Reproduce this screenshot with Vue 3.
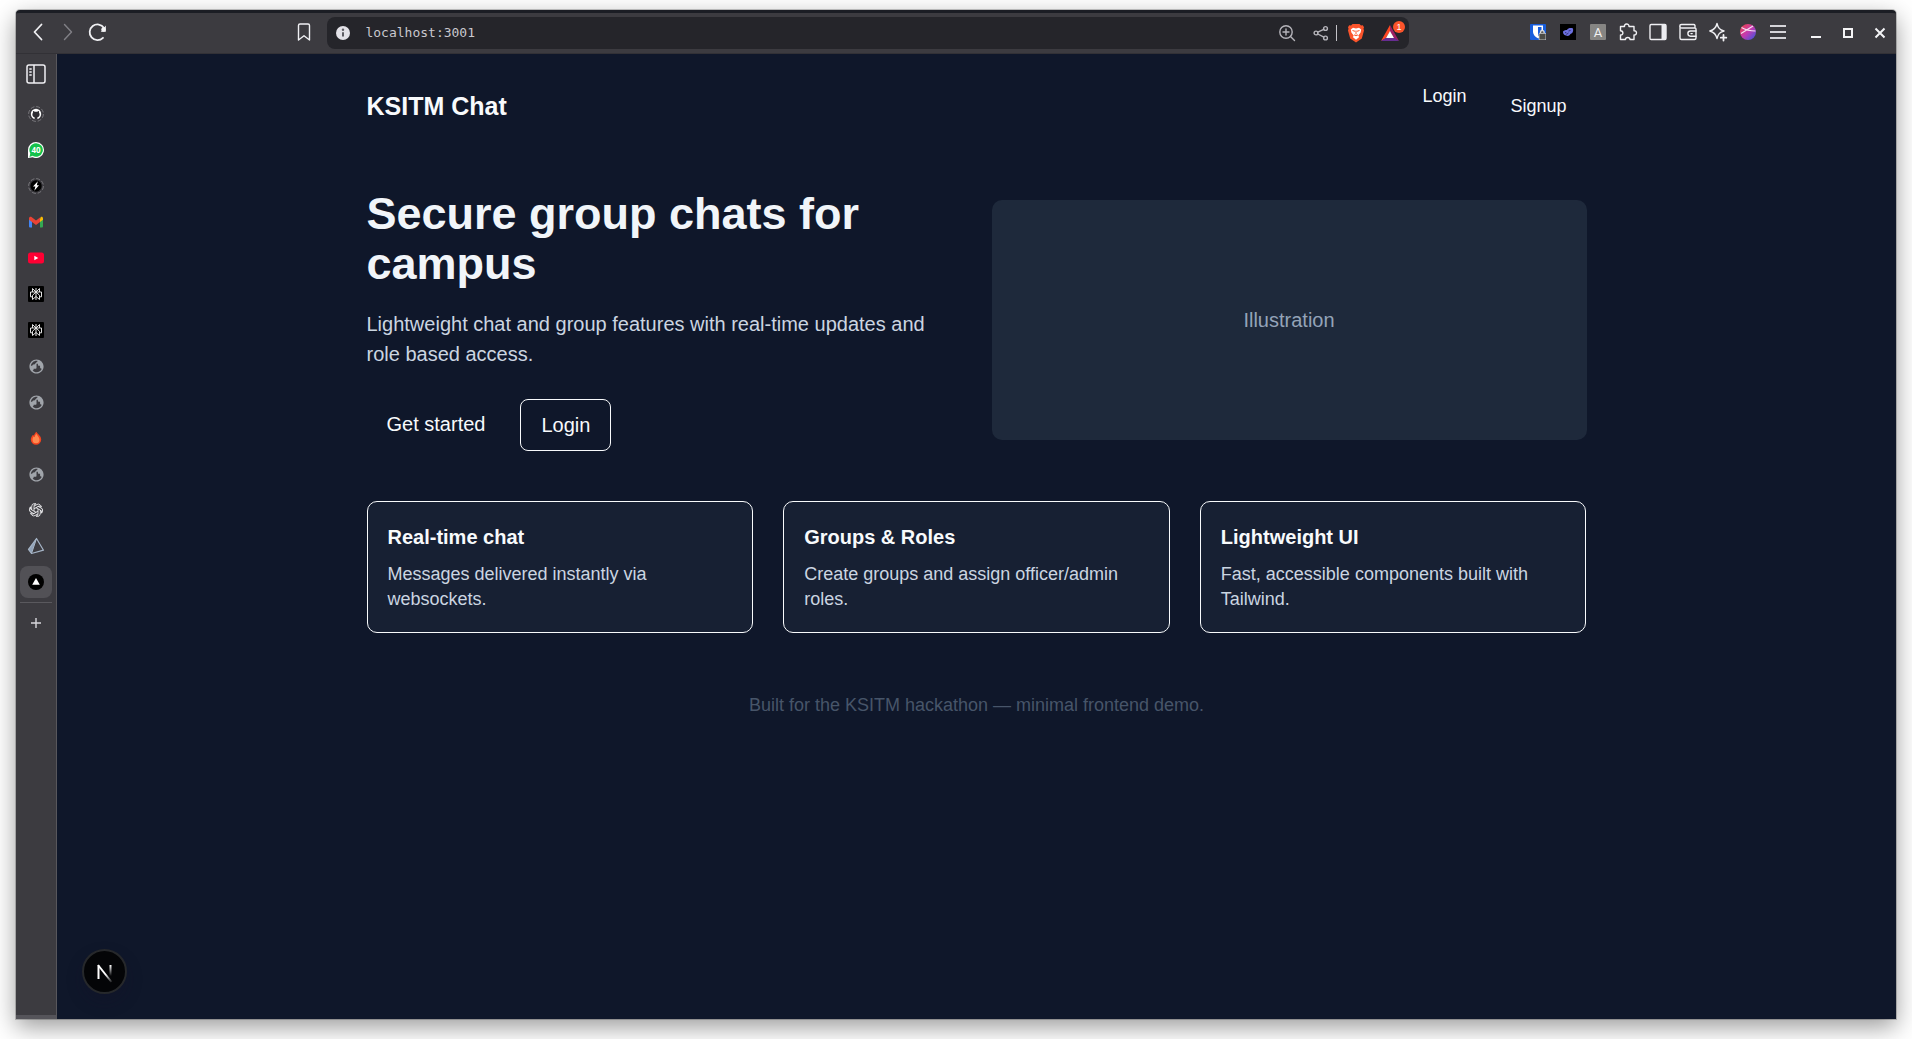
<script setup>
import { ref } from 'vue'

const address = ref('localhost:3001')

const tabs = [
  { icon: 'github', label: 'GitHub' },
  { icon: 'whatsapp', label: 'WhatsApp' },
  { icon: 'bolt', label: 'Bolt' },
  { icon: 'gmail', label: 'Gmail' },
  { icon: 'youtube', label: 'YouTube' },
  { icon: 'perplexity', label: 'Perplexity' },
  { icon: 'perplexity', label: 'Perplexity' },
  { icon: 'globe', label: 'New page' },
  { icon: 'globe', label: 'New page' },
  { icon: 'flame', label: 'Firebase' },
  { icon: 'globe', label: 'New page' },
  { icon: 'openai', label: 'ChatGPT' },
  { icon: 'prisma', label: 'Prisma' },
  { icon: 'vercel', label: 'KSITM Chat', active: true },
]

const features = [
  { title: 'Real-time chat', text: 'Messages delivered instantly via websockets.' },
  { title: 'Groups & Roles', text: 'Create groups and assign officer/admin roles.' },
  { title: 'Lightweight UI', text: 'Fast, accessible components built with Tailwind.' },
]
</script>

<template>
  <div class="desktop">
    <div class="window">
      <header class="toolbar">
        <div class="group">
          <button class="tool" aria-label="Back">
            <svg width="24" height="24" viewBox="0 0 24 24"><path d="M15.500 4.500 8.500 12l7 7.500" class="line bright thick" /></svg>
          </button>
          <button class="tool" aria-label="Forward">
            <svg width="24" height="24" viewBox="0 0 24 24"><path d="M8.500 4.500 15.500 12l-7 7.500" class="line dim" /></svg>
          </button>
          <button class="tool" aria-label="Reload">
            <svg width="24" height="24" viewBox="0 0 24 24">
              <path d="M17 17.800A7.800 7.800 0 1 1 18 8" class="line bright thick" />
              <path d="M19.800 5.500v6.200h-5z" fill="#f4f4f6" /><circle cx="17.500" cy="9.500" r="2.200" fill="#f4f4f6" />
            </svg>
          </button>
        </div>
        <div class="gap-left"></div>
        <button class="tool" aria-label="Bookmark">
          <svg width="24" height="24" viewBox="0 0 24 24"><path d="M6.500 5.500a1.500 1.500 0 0 1 1.500-1.500h8a1.500 1.500 0 0 1 1.500 1.500V20L12 15.800 6.500 20z" class="line bright" /></svg>
        </button>
        <div class="address">
          <svg width="16" height="16" viewBox="0 0 16 16"><circle cx="8" cy="8" r="7" fill="#e3e2e8" /><path d="M8 7.200v4.300" stroke="#5c5c62" stroke-width="2" /><circle cx="8" cy="4.800" r="1.200" fill="#5c5c62" /></svg>
          <input v-model="address" class="url" type="text" aria-label="Address" />
          <button class="tool" aria-label="Zoom">
            <svg width="24" height="24" viewBox="0 0 24 24"><circle cx="11" cy="11" r="6.200" class="line soft" /><path d="m15.500 15.500 4 4M8 11h6M11 8v6" class="line soft" /></svg>
          </button>
          <button class="tool share" aria-label="Share">
            <svg width="24" height="24" viewBox="0 0 24 24"><g class="line soft"><circle cx="7" cy="12" r="1.900" /><circle cx="16.500" cy="7.500" r="1.900" /><circle cx="16.500" cy="17" r="1.900" /><path d="m8.800 11.200 6-2.900M8.800 13l6 3.200" /></g></svg>
          </button>
          <span class="rule"></span>
          <button class="tool brave" aria-label="Brave Shields">
            <svg width="24" height="24" viewBox="0 0 24 24">
              <path d="M8.500 3h7l1.500 1.500 1.800-.3 1.200 2-.5 1.500.5 1.800-2.200 8L12 21.500 6.200 17.500 4 9.500l.5-1.800L4 6.200l1.200-2 1.800.3z" fill="#fb542b" />
              <path d="m6.800 8.500 2.200-1.700 3 .6 3-.6 2.200 1.700-.6 3-2.400 3.300 1 1.200-3.200 2.800-3.200-2.800 1-1.200-2.400-3.300z" fill="#fff" />
              <path d="m8.500 9.500 2.600.8M15.500 9.500l-2.600.8M12 9.500v4M10 13.800l2 1 2-1" stroke="#fb542b" stroke-width="1" fill="none" />
            </svg>
          </button>
          <button class="tool rewards" aria-label="Brave Rewards">
            <svg width="24" height="24" viewBox="0 0 24 24"><path d="M12 4v6.500L7.500 17.500 3 20z" fill="#ff4724" /><path d="M12 4v6.500l4.500 7L21 20z" fill="#9e1f63" /><path d="m3 20 4.500-3h9l4.500 3z" fill="#662d91" /><path d="m12 10 4 7H8z" fill="#fff" /></svg>
            <span class="count">1</span>
          </button>
        </div>
        <div class="gap-right"></div>
        <div class="group extensions">
          <button class="tool" aria-label="Bitwarden">
            <svg width="16" height="16" viewBox="0 0 16 16"><rect width="16" height="16" rx="1" fill="#175ddc" /><path d="M3 1.500h10v6c0 3.500-2.500 5.500-5 6.800-2.500-1.300-5-3.300-5-6.800z" fill="#fff" /><path d="M8 3h3.500v4.500c0 2-1.500 3.500-3.500 4.700z" fill="#175ddc" /><path d="M10.500 9.500V8.300a1.800 1.800 0 0 1 3.600 0v1.200" stroke="#ddd" fill="#444" stroke-width="1.300" /><rect x="9" y="9.300" width="7" height="6.700" rx="1" fill="#4b4b46" stroke="#ddd" stroke-width=".8" /></svg>
          </button>
          <button class="tool" aria-label="Masks">
            <svg width="16" height="16" viewBox="0 0 16 16"><rect width="16" height="16" fill="#000" /><path d="M3 7.500c1-1.500 3-1.500 4-1.500 1-2 4-2.500 6-1.500.6 3-.5 5-2.500 5.500-1 2-3 2.500-4.500 1.500C3.500 11 3 9.500 3 7.500z" fill="#6c6fe0" /><path d="m5 8.500 1.500.5M8.500 7l2-.5M6.500 10.500l2-1.500" stroke="#30306f" stroke-width="1" /></svg>
          </button>
          <button class="tool" aria-label="Text extension"><span class="letter">A</span></button>
          <button class="tool" aria-label="Extensions">
            <svg width="24" height="24" viewBox="0 0 24 24"><path d="M4.500 6.500h4c-.6-3 4.500-3.600 4.500 0h5v4.200c3.300-.3 3.300 4.600 0 4.300v4.500h-4c0-2.600-4.500-2.600-4.500 0h-5V15c3.200.2 3.200-4.300 0-4.300z" class="line bright" /></svg>
          </button>
          <button class="tool" aria-label="Sidebar">
            <svg width="24" height="24" viewBox="0 0 24 24"><rect x="4" y="4.500" width="16" height="15" rx="1.200" class="line bright" /><path d="M15.500 4h4.500v16h-4.500z" fill="#ececf0" /></svg>
          </button>
          <button class="tool" aria-label="Wallet">
            <svg width="24" height="24" viewBox="0 0 24 24"><g class="line bright"><path d="M19 8V5.500A1.500 1.500 0 0 0 17.500 4.500H5.500a1.700 1.700 0 0 0 0 3.500H19a1 1 0 0 1 1 1v9a1.500 1.500 0 0 1-1.500 1.500h-13A1.500 1.500 0 0 1 4 18V6" /><path d="M20 11h-5.500a2.600 2.600 0 0 0 0 5.200H20M15 13.600h1.200" /></g></svg>
          </button>
          <button class="tool" aria-label="Leo AI">
            <svg width="24" height="24" viewBox="0 0 24 24"><path d="M11 3.500c1 4.500 2.500 6.300 7 7.500-4.500 1.200-6 3-7 7.500-1-4.500-2.700-6.300-7.200-7.500C8.300 9.800 10 8 11 3.500z" class="line bright" /><path d="M17.500 15v5.500M14.800 17.700h5.500" class="line bright thick" /></svg>
          </button>
          <button class="tool" aria-label="Profile">
            <svg width="24" height="24" viewBox="0 0 24 24"><defs><linearGradient id="avatar" x1="0" y1="0" x2="1" y2="1"><stop offset="0" stop-color="#f0453f" /><stop offset=".5" stop-color="#c43bb0" /><stop offset="1" stop-color="#3157e5" /></linearGradient></defs><circle cx="12" cy="12" r="8" fill="url(#avatar)" /><path d="M5.500 7.500c4 2.500 8 3.500 14 3.500M5 13.500 17 6" stroke="#f6dff3" stroke-width="1.200" fill="none" /></svg>
          </button>
          <button class="tool" aria-label="Menu">
            <svg width="24" height="24" viewBox="0 0 24 24"><path d="M4 6h16M4 12h16M4 18h16" stroke="#d5d4d9" stroke-width="2" /></svg>
          </button>
        </div>
        <div class="group controls">
          <button class="tool" aria-label="Minimize"><svg width="24" height="24" viewBox="0 0 24 24"><path d="M7 17h10" stroke="#f4f4f6" stroke-width="2" /></svg></button>
          <button class="tool" aria-label="Maximize"><svg width="24" height="24" viewBox="0 0 24 24"><path d="M8 9h8v8H8z" stroke="#f4f4f6" stroke-width="2" fill="none" /></svg></button>
          <button class="tool" aria-label="Close"><svg width="24" height="24" viewBox="0 0 24 24"><path d="m7.500 8.500 9 9M16.500 8.500l-9 9" stroke="#f4f4f6" stroke-width="2" /></svg></button>
        </div>
      </header>

      <div class="body">
        <nav class="sidebar" aria-label="Tabs">
          <button class="tab panel" aria-label="Collapse tabs">
            <svg width="20" height="20" viewBox="0 0 20 20"><rect x="1" y="1" width="18" height="18" rx="2" fill="none" stroke="#f0f0f3" stroke-width="1.500" /><path d="M8 1v18" stroke="#f0f0f3" stroke-width="1.500" /><path d="M3.300 5h2.400M3.300 8h2.400M3.300 11h2.400" stroke="#f0f0f3" stroke-width="1.500" /></svg>
          </button>
          <button v-for="(tab, i) in tabs" :key="i" class="tab" :class="{ active: tab.active }" :aria-label="tab.label">
            <svg v-if="tab.icon === 'github'" width="16" height="16" viewBox="0 0 16 16">
              <circle cx="8" cy="8" r="7.400" fill="none" stroke="#77767b" stroke-width="1" stroke-dasharray="4 1.800" />
              <circle cx="8" cy="8" r="5.200" fill="#fff" />
              <path d="M6.600 13.400v-2.100c-1.500-.5-2.200-1.400-2.200-2.900 0-.7.200-1.200.6-1.700-.2-.6-.1-1.100.1-1.600.6 0 1.200.3 1.700.7h2.400c.5-.4 1.100-.7 1.700-.7.200.5.300 1 .1 1.600.4.500.6 1 .6 1.700 0 1.500-.7 2.400-2.200 2.900v2.100z" fill="#2d2c31" />
            </svg>
            <span v-else-if="tab.icon === 'whatsapp'" class="whatsapp">
              <svg width="16" height="16" viewBox="0 0 16 16"><path d="M8 0a8 8 0 1 1-3.300 15.300L0 16V8a8 8 0 0 1 8-8z" fill="#fff" /><path d="M8 1.200a6.800 6.800 0 1 1-3.500 12.600L1.500 15l.8-3.500A6.800 6.800 0 0 1 8 1.200z" fill="#15c24b" /></svg>
              <span class="unread">40</span>
            </span>
            <svg v-else-if="tab.icon === 'bolt'" width="16" height="16" viewBox="0 0 16 16">
              <circle cx="8" cy="8" r="7.400" fill="none" stroke="#77767b" stroke-width="1" stroke-dasharray="4 1.800" />
              <circle cx="8" cy="8" r="5.700" fill="#000" />
              <path d="M9.800 3.300 5 8.500h2.400L6.300 12.700 11 7.200H8.800z" fill="#fff" />
            </svg>
            <svg v-else-if="tab.icon === 'gmail'" width="16" height="16" viewBox="0 0 16 16">
              <path d="M1 4.500v8a1 1 0 0 0 1 1h2V7z" fill="#4285f4" /><path d="M15 4.500v8a1 1 0 0 1-1 1h-2V7z" fill="#34a853" /><path d="M12 5.200V8l3-2.300V4.300c0-1.500-1.300-2-2.300-1.300z" fill="#fbbc04" /><path d="M1 5.700V4.300C1 2.800 2.500 2.300 3.500 3L8 6.400l4-3V8l-4 3-4-3z" fill="#ea4335" />
            </svg>
            <svg v-else-if="tab.icon === 'youtube'" width="16" height="16" viewBox="0 0 16 16"><rect y="2.500" width="16" height="11" rx="2.500" fill="#ff0033" /><path d="m6.300 5.800 4 2.200-4 2.200z" fill="#fff" /></svg>
            <svg v-else-if="tab.icon === 'perplexity'" width="16" height="16" viewBox="0 0 16 16"><rect width="16" height="16" rx="1" fill="#000" /><path d="M8 2v12M4.500 2.500 8 6l3.500-3.500V6h-7zM4.500 6H2.500v4.800h2M11.500 6h2v4.800h-2M8 6 4.500 9.300v4.200L8 10.500l3.500 3V9.300z" fill="none" stroke="#e2e2e2" stroke-width="1" /></svg>
            <svg v-else-if="tab.icon === 'globe'" width="17" height="17" viewBox="0 0 24 24">
              <path d="M12 2C6.480 2 2 6.480 2 12s4.480 10 10 10 10-4.480 10-10S17.520 2 12 2zm-1 17.930c-3.950-.49-7-3.850-7-7.930 0-.62.080-1.210.210-1.790L9 15v1c0 1.100.9 2 2 2v1.930zm6.900-2.540c-.26-.81-1-1.390-1.900-1.390h-1v-3c0-.55-.45-1-1-1H8v-2h2c.55 0 1-.45 1-1V7h2c1.100 0 2-.9 2-2v-.41c2.930 1.190 5 4.060 5 7.410 0 2.080-.8 3.970-2.100 5.390z" transform="rotate(90 12 12)" fill="#a0a4aa" />
            </svg>
            <svg v-else-if="tab.icon === 'flame'" width="16" height="16" viewBox="0 0 16 16"><path d="M8.500 1.800c1 2.500 4.700 4 4.700 7.700a5.200 5.200 0 0 1-10.400 0c0-2 1-3.300 2.200-4.800l1 1c.3-1.700 1.200-3 2.500-3.900z" fill="#f4431e" /><path d="M8.300 3.800c.8 1.700 3.200 3.300 3.200 6a3.500 3.500 0 0 1-7 0c0-1.600.7-2.600 1.300-3.300l.9.700c.2-1.300.8-2.500 1.600-3.400z" fill="#ff8a50" /></svg>
            <svg v-else-if="tab.icon === 'openai'" width="16" height="16" viewBox="0 0 16 16">
              <g fill="none" stroke="#e8e8ea" stroke-width=".9"><path v-for="n in 6" :key="n" d="M6 9.200V4.200L9 2.500a2.700 2.700 0 0 1 4 2.800M6 4.200a2.700 2.700 0 0 1 2-2.700" :transform="`rotate(${n * 60} 8 8)`" /></g>
            </svg>
            <svg v-else-if="tab.icon === 'prisma'" width="18" height="18" viewBox="0 0 18 18"><path d="M9.500 1.500 1.500 12.300l3 4.200z" fill="#90a2b8" /><path d="M9.500 1.500 1.500 12.300l3 4.200 12-3.300z" fill="none" stroke="#a5b4c6" stroke-width="1.200" stroke-linejoin="round" /><path d="M9.500 1.500 4.500 16.500" stroke="#a5b4c6" /></svg>
            <svg v-else width="16" height="16" viewBox="0 0 16 16"><circle cx="8" cy="8" r="8" fill="#000" /><path d="m8 4 3.800 6.700H4.200z" fill="#fff" /></svg>
          </button>
          <span class="divider"></span>
          <button class="tab new" aria-label="New tab"><svg width="12" height="12" viewBox="0 0 12 12"><path d="M6 1v10M1 6h10" stroke="#d8d7dc" stroke-width="1.400" /></svg></button>
          <span class="foot"></span>
        </nav>

        <div class="page">
          <div class="content">
            <header class="site-header">
              <strong class="brand">KSITM Chat</strong>
              <nav class="links" aria-label="Account">
                <a href="#login">Login</a>
                <a href="#signup" class="padded">Signup</a>
              </nav>
            </header>

            <section class="hero">
              <div>
                <h1>Secure group chats for campus</h1>
                <p class="lead">Lightweight chat and group features with real-time updates and role based access.</p>
                <div class="actions">
                  <a href="#signup" class="action">Get started</a>
                  <a href="#login" class="action outlined">Login</a>
                </div>
              </div>
              <div class="illustration">Illustration</div>
            </section>

            <section class="features">
              <article v-for="feature in features" :key="feature.title" class="card">
                <h2>{{ feature.title }}</h2>
                <p>{{ feature.text }}</p>
              </article>
            </section>

            <footer class="site-footer">Built for the KSITM hackathon — minimal frontend demo.</footer>
          </div>

          <button class="devtools" aria-label="Open Next.js Dev Tools">
            <svg width="45" height="45" viewBox="0 0 45 45">
              <defs>
                <linearGradient id="diagonal" x1="24" y1="25" x2="30" y2="34" gradientUnits="userSpaceOnUse"><stop stop-color="#fff" /><stop offset="1" stop-color="#fff" stop-opacity="0" /></linearGradient>
                <linearGradient id="stem" x1="0" y1="16" x2="0" y2="27" gradientUnits="userSpaceOnUse"><stop stop-color="#fff" /><stop offset="1" stop-color="#fff" stop-opacity="0" /></linearGradient>
              </defs>
              <circle cx="22.500" cy="22.500" r="21.500" fill="#040507" stroke="#26282b" stroke-width="2" />
              <path d="M16.500 30V16.500" fill="none" stroke="#fff" stroke-width="2" />
              <path d="m16 16 13.500 17" stroke="url(#diagonal)" stroke-width="2" />
              <path d="M27.500 16h2v11h-2z" fill="url(#stem)" />
            </svg>
          </button>
        </div>
      </div>
    </div>
  </div>
</template>

<style>
html,
body {
  margin: 0;
  background: #fff;
}
</style>

<style scoped>
* {
  box-sizing: border-box;
}

.desktop {
  display: flex;
  min-height: calc(100vh - 12px);
  padding: 10px 16px 20px;
  overflow: hidden;
  font-family: "Liberation Sans", Arial, sans-serif;
}

.window {
  flex: 1;
  display: flex;
  flex-direction: column;
  min-width: 0;
  border-top: 3px solid #1b1d24;
  border-radius: 4px 4px 0 0;
  background: #3c3b40;
  box-shadow: 0 0 0 1px rgba(0, 0, 0, 0.2), 0 8px 24px rgba(0, 0, 0, 0.4);
}

button {
  padding: 0;
  border: 0;
  background: none;
  color: inherit;
  font: inherit;
}

svg {
  display: block;
}

.toolbar {
  display: flex;
  align-items: center;
  height: 41px;
  padding: 0 1px 2px 7px;
  border-bottom: 1px solid #323136;
}

.group {
  display: flex;
}

.tool {
  position: relative;
  display: flex;
  flex: none;
  align-items: center;
  justify-content: center;
  width: 30px;
  height: 30px;
}

.line {
  fill: none;
  stroke-width: 1.4;
  stroke-linecap: round;
  stroke-linejoin: round;
}

.thick {
  stroke-width: 1.8;
}

.bright {
  stroke: #f0f0f3;
}

.soft {
  stroke: #b5b4ba;
}

.dim {
  stroke: #818086;
}

.gap-left {
  flex: 178 1 0;
}

.gap-right {
  flex: 115 1 0;
}

.address {
  flex: 1079 1 0;
  display: flex;
  align-items: center;
  min-width: 0;
  height: 32px;
  margin: 1px 0 0 8px;
  padding: 0 4px 0 8px;
  border-radius: 8px;
  background: #25252a;
}

.url {
  flex: 1;
  min-width: 0;
  padding: 0 0 0 14px;
  border: 0;
  outline: 0;
  background: none;
  color: #c9c8ce;
  font: 13px/20px "DejaVu Sans Mono", monospace;
}

.share {
  margin-left: 4px;
}

.rule {
  width: 1px;
  height: 16px;
  background: #c4c3c8;
}

.brave {
  margin-left: 4px;
}

.rewards {
  margin-left: 4px;
}

.count {
  position: absolute;
  top: 3px;
  right: 0;
  width: 12px;
  height: 12px;
  border-radius: 50%;
  background: #fb542b;
  color: #fff;
  font-size: 9px;
  line-height: 12px;
  text-align: center;
}

.letter {
  width: 16px;
  height: 16px;
  border-radius: 1px;
  background: #868583;
  color: #f2f2f2;
  font: 13px/17px Roboto, sans-serif;
  text-align: center;
}

.controls {
  gap: 2px;
  margin-left: 8px;
}

.body {
  flex: 1;
  display: flex;
}

.sidebar {
  display: flex;
  flex: none;
  flex-direction: column;
  align-items: center;
  width: 41px;
  border-right: 1px solid #58575c;
}

.tab {
  display: flex;
  align-items: center;
  justify-content: center;
  width: 32px;
  height: 32px;
  margin-bottom: 4px;
  border-radius: 8px;
}

.panel {
  margin: 4px 0 8px;
}

.active {
  background: #525156;
}

.whatsapp {
  position: relative;
}

.unread {
  position: absolute;
  inset: 0;
  color: #fff;
  font: bold 8px/16px "Open Sans", sans-serif;
  text-align: center;
}

.divider {
  width: 32px;
  height: 1px;
  background: #5a595e;
}

.new {
  margin-top: 4px;
}

.foot {
  width: 100%;
  height: 4px;
  margin-top: auto;
  background: #55545a;
}

.page {
  position: relative;
  flex: 1;
  min-width: 0;
  background: #0f172a;
  color: #f8fafc;
}

.content {
  max-width: 1280px;
  margin: 0 auto;
  padding: 30px;
}

a {
  color: inherit;
  text-decoration: none;
}

.site-header {
  display: flex;
  align-items: center;
  justify-content: space-between;
}

.brand {
  font-size: 25px;
  line-height: 35px;
}

.links {
  display: flex;
  align-items: flex-start;
  gap: 24px;
  font-size: 18px;
  line-height: 25px;
}

.padded {
  padding: 10px 20px;
}

.hero {
  display: grid;
  grid-template-columns: 1fr 1fr;
  align-items: center;
  gap: 30px;
  margin-top: 60px;
}

h1 {
  margin: 0;
  color: #f1f5f9;
  font-size: 45px;
  line-height: 50px;
}

.lead {
  margin: 20px 0 30px;
  color: #cbd5e1;
  font-size: 20px;
  line-height: 30px;
}

.actions {
  display: flex;
  align-items: flex-start;
  gap: 15px;
  font-size: 20px;
  line-height: 30px;
}

.action {
  padding: 10px 20px;
  border-radius: 8px;
}

.outlined {
  border: 1px solid #f8fafc;
}

.illustration {
  display: flex;
  align-items: center;
  justify-content: center;
  height: 240px;
  border-radius: 10px;
  background: #1e293b;
  color: #94a3b8;
  font-size: 20px;
  line-height: 30px;
}

.features {
  display: grid;
  grid-template-columns: repeat(3, 1fr);
  gap: 30px;
  margin-top: 50px;
}

.card {
  padding: 20px;
  border: 1px solid #f8fafc;
  border-radius: 10px;
  background: #172033;
}

.card h2 {
  margin: 0 0 10px;
  font-size: 20px;
  line-height: 30px;
}

.card p {
  margin: 0;
  color: #cbd5e1;
  font-size: 18px;
  line-height: 25px;
}

.site-footer {
  margin-top: 60px;
  color: #475569;
  font-size: 18px;
  line-height: 25px;
  text-align: center;
}

.devtools {
  position: absolute;
  bottom: 25px;
  left: 25px;
  border-radius: 50%;
  box-shadow: 0 8px 16px rgba(20, 16, 40, 0.3);
}
</style>
